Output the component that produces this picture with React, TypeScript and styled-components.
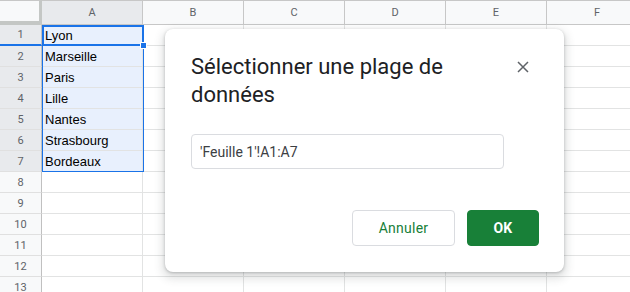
import React from "react";
import styled, { createGlobalStyle } from "styled-components";

const Global = createGlobalStyle`
  html, body { margin: 0; padding: 0; background: #fff; overflow: hidden; }
  body { font-family: Roboto, "Liberation Sans", Arial, sans-serif; }
  * { box-sizing: border-box; }
`;

const Page = styled.div`
  position: relative;
  width: 630px;
  height: 292px;
  overflow: hidden;
`;

const Sheet = styled.div`
  display: grid;
  grid-template-columns: 42px repeat(6, 101px);
  grid-template-rows: 25px;
  grid-auto-rows: 21px;
`;

const Corner = styled.div`
  background: #f8f9fa;
  border-top: 1px solid #c7c7c7;
  border-right: 3px solid #c4c7c5;
  border-bottom: 4px solid #c4c7c5;
`;

const ColHeader = styled.div<{ $selected?: boolean }>`
  background: ${(p) => (p.$selected ? "#e8eaed" : "#f8f9fa")};
  border-top: 1px solid #c7c7c7;
  border-right: 1px solid #c7c7c7;
  border-bottom: 1px solid #c7c7c7;
  display: flex;
  align-items: center;
  justify-content: center;
  font-family: Roboto, Arial, sans-serif;
  font-size: 11px;
  color: #5f6368;
`;

const RowHeader = styled.div<{ $selected?: boolean; $marked?: boolean }>`
  background: ${(p) => (p.$selected ? "#e8eaed" : "#f8f9fa")};
  border-right: 1px solid #c0c0c0;
  border-bottom: ${(p) => (p.$marked ? "2px solid #1a73e8" : "1px solid #e0e0e0")};
  display: flex;
  align-items: center;
  justify-content: center;
  font-family: Roboto, Arial, sans-serif;
  font-size: 11px;
  color: #5f6368;
`;

const Cell = styled.div<{ $inRange?: boolean }>`
  background: ${(p) => (p.$inRange ? "#e8f0fd" : "#fff")};
  border-right: 1px solid #e2e3e3;
  border-bottom: 1px solid #e2e3e3;
  font-family: "Liberation Sans", Arial, sans-serif;
  font-size: 13px;
  color: #000;
  padding-left: 3px;
  display: flex;
  align-items: center;
  white-space: nowrap;
  overflow: hidden;
`;

const RangeBox = styled.div`
  position: absolute;
  left: 42px;
  top: 25px;
  width: 102px;
  height: 147px;
  border: 1px solid #1a73e8;
  pointer-events: none;
`;

const ActiveCell = styled.div`
  position: absolute;
  left: 42px;
  top: 25px;
  width: 102px;
  height: 21px;
  border: 2px solid #1a73e8;
  pointer-events: none;
`;

const FillHandle = styled.div`
  position: absolute;
  left: 140px;
  top: 42px;
  width: 7px;
  height: 7px;
  background: #1a73e8;
  border: 1px solid #fff;
`;

const Dialog = styled.div`
  position: absolute;
  left: 165px;
  top: 29px;
  width: 399px;
  height: 243px;
  background: #fff;
  border-radius: 8px;
  box-shadow: 0 4px 8px 3px rgba(60, 64, 67, 0.15), 0 1px 3px rgba(60, 64, 67, 0.3);
  padding: 24px 25px 26px 26px;
  display: flex;
  flex-direction: column;
`;

const TitleRow = styled.div`
  display: flex;
  justify-content: space-between;
  align-items: flex-start;
`;

const Title = styled.h2`
  margin: 0;
  max-width: 300px;
  font-family: Roboto, Arial, sans-serif;
  font-weight: 400;
  font-size: 22px;
  line-height: 28px;
  color: #202124;
`;

const CloseButton = styled.button`
  width: 24px;
  height: 24px;
  margin: 2px 4px 0 0;
  padding: 0;
  border: none;
  background: transparent;
  display: flex;
  align-items: center;
  justify-content: center;
  color: #5f6368;
`;

const RangeInput = styled.div`
  margin-top: 25px;
  width: 313px;
  height: 35px;
  border: 1px solid #dadce0;
  border-radius: 4px;
  padding-left: 8px;
  display: flex;
  align-items: center;
  font-family: Roboto, Arial, sans-serif;
  font-size: 14px;
  color: #3c4043;
`;

const Actions = styled.div`
  margin-top: auto;
  display: flex;
  justify-content: flex-end;
  gap: 12px;
`;

const Button = styled.button<{ $primary?: boolean }>`
  height: 36px;
  width: ${(p) => (p.$primary ? "72px" : "103px")};
  border-radius: 4px;
  border: 1px solid ${(p) => (p.$primary ? "#188038" : "#dadce0")};
  background: ${(p) => (p.$primary ? "#188038" : "#fff")};
  color: ${(p) => (p.$primary ? "#fff" : "#188038")};
  font-family: Roboto, Arial, sans-serif;
  font-size: 14px;
  font-weight: ${(p) => (p.$primary ? 700 : 400)};
  letter-spacing: 0.25px;
  padding: 0;
`;

const columns = ["A", "B", "C", "D", "E", "F"];
const cities = ["Lyon", "Marseille", "Paris", "Lille", "Nantes", "Strasbourg", "Bordeaux"];

export default function App() {
  const rows = Array.from({ length: 13 }, (_, i) => i + 1);
  return (
    <Page>
      <Global />
      <Sheet>
        <Corner />
        {columns.map((c) => (
          <ColHeader key={c} $selected={c === "A"}>
            {c}
          </ColHeader>
        ))}
        {rows.map((r) => (
          <React.Fragment key={r}>
            <RowHeader $selected={r <= 7} $marked={r === 1}>
              {r}
            </RowHeader>
            {columns.map((c) => (
              <Cell key={c} $inRange={c === "A" && r <= 7}>
                {c === "A" && r <= 7 ? cities[r - 1] : ""}
              </Cell>
            ))}
          </React.Fragment>
        ))}
      </Sheet>
      <RangeBox />
      <ActiveCell />
      <FillHandle />
      <Dialog role="dialog">
        <TitleRow>
          <Title>Sélectionner une plage de données</Title>
          <CloseButton aria-label="Fermer">
            <svg width="12" height="12" viewBox="0 0 12 12">
              <path d="M1 1L11 11M11 1L1 11" stroke="currentColor" strokeWidth="1.5" />
            </svg>
          </CloseButton>
        </TitleRow>
        <RangeInput>'Feuille 1'!A1:A7</RangeInput>
        <Actions>
          <Button>Annuler</Button>
          <Button $primary>OK</Button>
        </Actions>
      </Dialog>
    </Page>
  );
}
